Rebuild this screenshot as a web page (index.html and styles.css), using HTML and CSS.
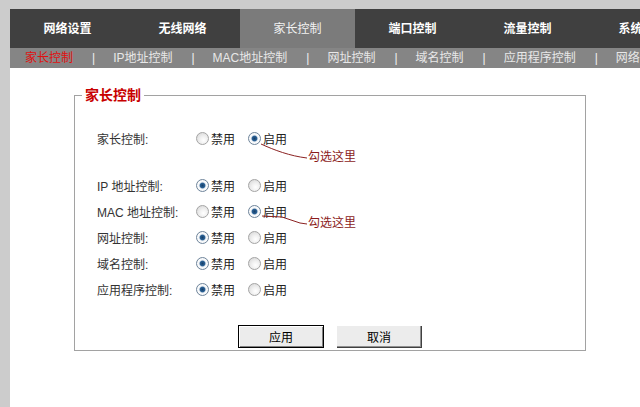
FILE: index.html
```html
<!DOCTYPE html>
<html lang="zh-CN">
<head>
<meta charset="utf-8">
<title>家长控制</title>
<link rel="stylesheet" href="styles.css">
</head>
<body>
<div class="frame">
  <nav class="tabs">
    <a class="tab">网络设置</a>
    <a class="tab">无线网络</a>
    <a class="tab active">家长控制</a>
    <a class="tab">端口控制</a>
    <a class="tab">流量控制</a>
    <a class="tab">系统管理</a>
  </nav>
  <div class="subnav">
    <a class="sub current">家长控制</a><span class="sep">|</span>
    <a class="sub">IP地址控制</a><span class="sep">|</span>
    <a class="sub">MAC地址控制</a><span class="sep">|</span>
    <a class="sub">网址控制</a><span class="sep">|</span>
    <a class="sub">域名控制</a><span class="sep">|</span>
    <a class="sub">应用程序控制</a><span class="sep">|</span>
    <a class="sub">网络设置</a>
  </div>
  <main class="content">
    <fieldset class="box">
      <legend class="box-title">家长控制</legend>
      <div class="rows">
        <div class="row row-main">
          <span class="label">家长控制:</span>
          <label class="opt"><input type="radio" name="pc">禁用</label>
          <label class="opt"><input type="radio" name="pc" checked>启用</label>
          <span class="hint hint-a">
            <svg class="hint-line" width="48" height="18" viewBox="0 0 48 18"><path d="M1 1 C 14 7, 30 13, 47 15" fill="none" stroke="#8b2222" stroke-width="1"/></svg>
            <span class="hint-text">勾选这里</span>
          </span>
        </div>
        <div class="row">
          <span class="label">IP 地址控制:</span>
          <label class="opt"><input type="radio" name="ip" checked>禁用</label>
          <label class="opt"><input type="radio" name="ip">启用</label>
        </div>
        <div class="row">
          <span class="label">MAC 地址控制:</span>
          <label class="opt"><input type="radio" name="mac">禁用</label>
          <label class="opt"><input type="radio" name="mac" checked>启用</label>
          <span class="hint hint-b">
            <svg class="hint-line" width="48" height="14" viewBox="0 0 48 14"><path d="M2 1 L 22 2 L 40 8 L 47 9" fill="none" stroke="#8b2222" stroke-width="1"/></svg>
            <span class="hint-text">勾选这里</span>
          </span>
        </div>
        <div class="row">
          <span class="label">网址控制:</span>
          <label class="opt"><input type="radio" name="url" checked>禁用</label>
          <label class="opt"><input type="radio" name="url">启用</label>
        </div>
        <div class="row">
          <span class="label">域名控制:</span>
          <label class="opt"><input type="radio" name="dn" checked>禁用</label>
          <label class="opt"><input type="radio" name="dn">启用</label>
        </div>
        <div class="row">
          <span class="label">应用程序控制:</span>
          <label class="opt"><input type="radio" name="app" checked>禁用</label>
          <label class="opt"><input type="radio" name="app">启用</label>
        </div>
      </div>
      <div class="actions">
        <button class="btn btn-default" type="button">应用</button>
        <button class="btn" type="button">取消</button>
      </div>
    </fieldset>
  </main>
</div>
</body>
</html>
```
FILE: styles.css
```css
html, body {
  margin: 0;
  padding: 0;
  height: 100%;
}
body {
  background: #cccccc;
  overflow: hidden;
  font-family: "Liberation Sans", "Noto Sans CJK SC", sans-serif;
  font-size: 12px;
  color: #222;
}
.frame {
  margin: 9px 0 0 10px;
  background: #ffffff;
  height: calc(100% - 9px);
  overflow: hidden;
}
.tabs {
  display: flex;
  height: 39px;
  background: #404040;
  white-space: nowrap;
}
.tab {
  flex: none;
  width: 115px;
  display: flex;
  align-items: center;
  justify-content: center;
  color: #ffffff;
  font-weight: bold;
  font-size: 12px;
  line-height: 1;
}
.tab.active {
  background: #7b7b7b;
  font-weight: normal;
  color: #f2f2f2;
}
.subnav {
  height: 20px;
  background: #858585;
  display: flex;
  align-items: center;
  padding-left: 15px;
  white-space: nowrap;
  line-height: 1;
}
.sub {
  flex: none;
  color: #e8e8e8;
}
.sub.current {
  color: #e01010;
}
.sep {
  flex: none;
  color: #f0f0f0;
  margin: 0 18px 0 19px;
}
.content {
  padding: 0;
}
.box {
  box-sizing: border-box;
  width: 512px;
  margin: 19px 0 0 64px;
  padding: 0 0 2px 0;
  border: 1px solid #a2a2a2;
  min-width: 0;
}
.box-title {
  margin-left: 7px;
  padding: 0 3px;
  font-size: 14px;
  line-height: 16px;
  font-weight: bold;
  color: #c80000;
}
.rows {
  padding: 22px 0 0 22px;
  display: flex;
  flex-direction: column;
}
.row {
  position: relative;
  height: 26px;
  display: flex;
  align-items: center;
}
.row-main {
  margin-bottom: 21px;
}
.label {
  flex: none;
  width: 99px;
  color: #333;
}
.opt {
  display: flex;
  align-items: center;
  margin-right: 13px;
  color: #222;
}
.opt input {
  appearance: none;
  -webkit-appearance: none;
  width: 13px;
  height: 13px;
  margin: 0 2px 0 0;
  border-radius: 50%;
  border: 1px solid #a4a4a4;
  background: radial-gradient(circle at 60% 65%, #ffffff 0, #f0f0f0 40%, #d2d2d2 100%);
  box-sizing: border-box;
}
.opt input:checked {
  border-color: #6f859b;
  background: radial-gradient(circle at 50% 50%, #163f69 0, #2a6094 30%, #e9eef3 44%, #ffffff 60%, #cbd3dc 100%);
}
.hint {
  position: absolute;
  display: block;
}
.hint-line {
  position: absolute;
  left: 0;
  top: 0;
}
.hint-text {
  position: absolute;
  left: 48px;
  white-space: nowrap;
  color: #8b1c1c;
  line-height: 12px;
}
.hint-a {
  left: 163px;
  top: 18px;
}
.hint-a .hint-text {
  top: 8px;
}
.hint-b {
  left: 163px;
  top: 17px;
}
.hint-b .hint-text {
  top: 2px;
}
.actions {
  display: flex;
  justify-content: center;
  gap: 12px;
  margin-top: 23px;
}
.btn {
  box-sizing: border-box;
  width: 86px;
  height: 23px;
  padding: 0;
  font: inherit;
  font-size: 12px;
  color: #000;
  background: #ececec;
  border: 0;
  border-radius: 0;
  box-shadow: inset 1px 1px #ffffff, inset -1px -1px #404040, inset -2px -2px #909090;
}
.btn-default {
  border: 1px solid #000;
  box-shadow: inset 1px 1px #ffffff, inset -1px -1px #808080;
}
```
